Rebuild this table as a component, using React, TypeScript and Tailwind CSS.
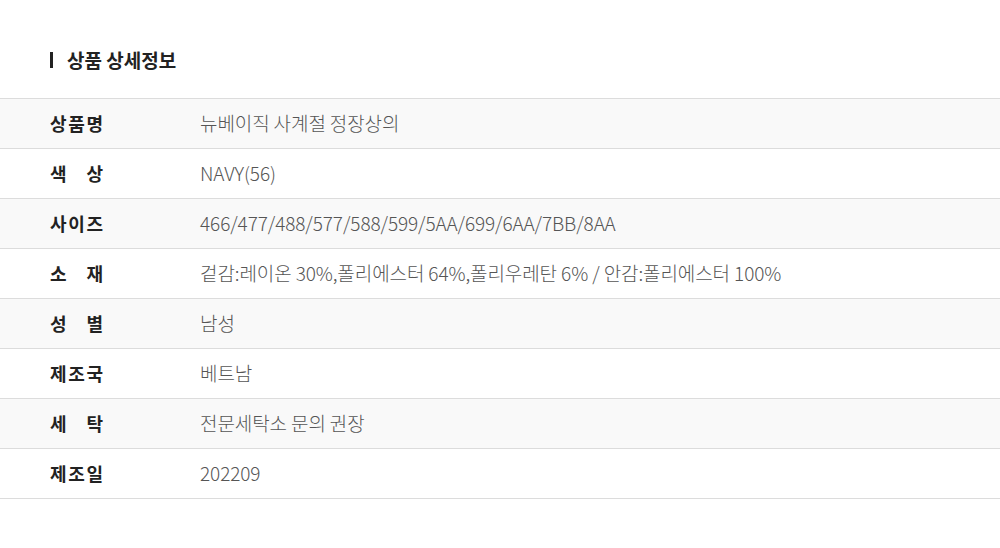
import React from 'react';

interface InfoRow {
  label: string;
  value: string;
}

const rows: InfoRow[] = [
  { label: '상품명', value: '뉴베이직 사계절 정장상의' },
  { label: '색상', value: 'NAVY(56)' },
  { label: '사이즈', value: '466/477/488/577/588/599/5AA/699/6AA/7BB/8AA' },
  { label: '소재', value: '겉감:레이온 30%,폴리에스터 64%,폴리우레탄 6% / 안감:폴리에스터 100%' },
  { label: '성별', value: '남성' },
  { label: '제조국', value: '베트남' },
  { label: '세탁', value: '전문세탁소 문의 권장' },
  { label: '제조일', value: '202209' },
];

const App: React.FC = () => {
  return (
    <div
      className="w-[1000px] h-[548px] bg-white pt-[49px]"
      style={{ fontFamily: '"Noto Sans CJK KR", "Noto Sans", sans-serif' }}
    >
      {/* Section title */}
      <div className="flex items-center px-[50px] h-[22px]">
        <span className="w-[3px] h-[16px] bg-[#222]" />
        <h2 className="ml-[14px] text-[19px] font-bold text-[#222] tracking-[0px]">상품 상세정보</h2>
      </div>

      {/* Detail table */}
      <div className="mt-[27px] border-t border-[#dcdcdc]">
        {rows.map((row, i) => (
          <div
            key={row.label}
            className={`flex items-center h-[50px] border-b border-[#dcdcdc] ${
              i % 2 === 0 ? 'bg-[#f9f9f9]' : 'bg-white'
            }`}
          >
            <div className="w-[200px] pl-[50px]">
              <span className="flex justify-between w-[53px] text-[18px] font-bold text-[#222]">
                {row.label.split('').map((ch, j) => (
                  <span key={j}>{ch}</span>
                ))}
              </span>
            </div>
            <div className="text-[19px] font-light text-[#555] tracking-[-0.1px]">{row.value}</div>
          </div>
        ))}
      </div>
    </div>
  );
};

export default App;
